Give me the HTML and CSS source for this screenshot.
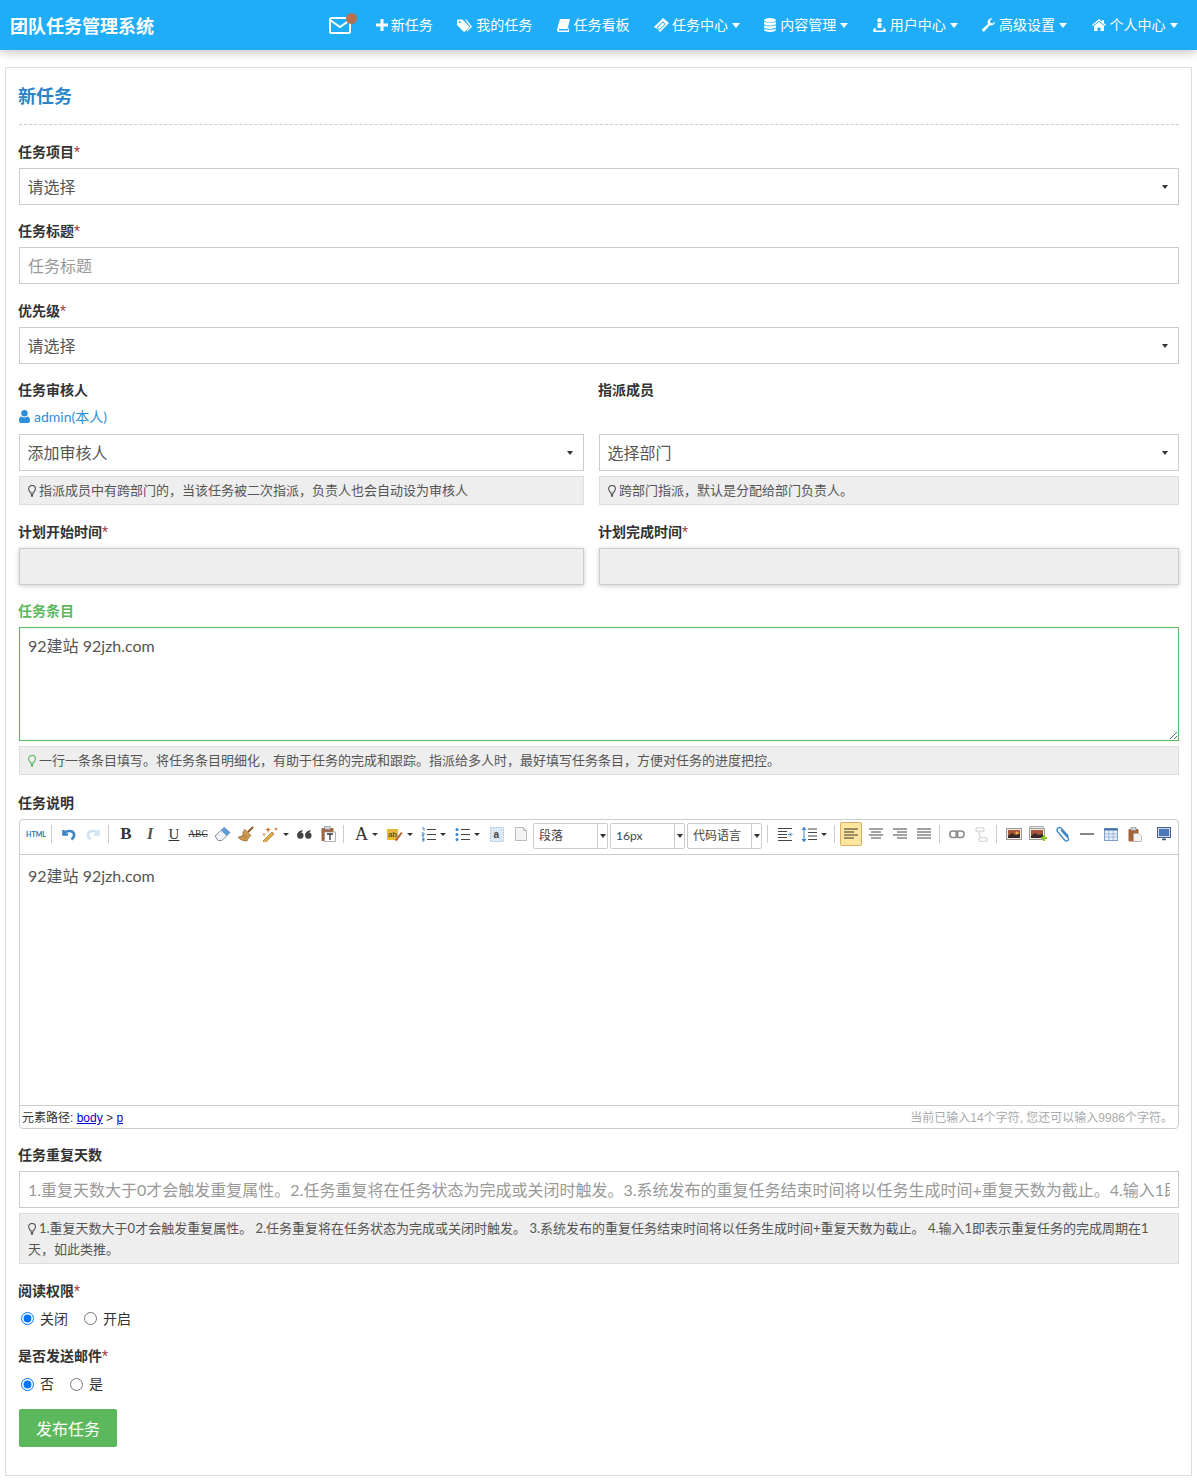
FILE: index.html
```html
<!DOCTYPE html>
<html>
<head>
  <meta charset="UTF-8" />
  <title>团队任务管理系统</title>
  <link rel="stylesheet" href="styles.css">
</head>

<body>
  <header class="topbar">
    <a class="brand">团队任务管理系统</a>
    <nav class="nav">
      <span class="mail">
        <svg width="22" height="17" viewBox="0 0 22 17" fill="none" stroke="#fff" stroke-width="2"><rect x="1" y="1" width="20" height="15" rx="1.5"/><path d="M1 3l10 7 10-7"/></svg>
        <i class="dot"></i>
      </span>
      <a class="nav-item nav-item-tight">
        <svg width="12" height="12" viewBox="0 0 12 12" fill="#fff"><path d="M4.500 0h3v4.500h4.500v3H7.500V12h-3V7.500H0v-3h4.500z"/></svg>新任务</a>
      <a class="nav-item">
        <svg width="15" height="13" viewBox="0 0 15 13" fill="#fff"><path d="M0 1v5l6.500 6.500a1 1 0 0 0 1.400 0l4-4a1 1 0 0 0 0-1.400L5.500 0.500H1z"/><path d="M8 .5h1.500l5 6.500a1 1 0 0 1 0 1.400l-4.200 4.200-1-.8 4-4.100z"/><circle cx="2.600" cy="3" r="1" fill="#1eadf6"/></svg>我的任务</a>
      <a class="nav-item">
        <svg width="13" height="13" viewBox="0 0 13 13" fill="#fff"><path d="M3 0h10l-2.500 10H2.300c-.8 0-.8 1.500 0 1.500H11l1-4v5.500H2C.5 13-.3 11.500.2 10z"/></svg>任务看板</a>
      <a class="nav-item nav-item-tight">
        <svg width="15" height="14" viewBox="0 0 15 14" fill="#fff"><path d="M9 0l6 5-9 9-1.800-1.800c.6-1-.4-2-1.400-1.400L0 9z"/><path d="M8.800 3.300l3 2.700-6 6-3-2.800z" fill="#1eadf6"/><path d="M8.800 4.500l1.900 1.600-5 5-1.900-1.700z"/></svg>任务中心<i class="caret"></i></a>
      <a class="nav-item">
        <svg width="12" height="14" viewBox="0 0 12 14" fill="#fff"><ellipse cx="6" cy="2.200" rx="6" ry="2.200"/><path d="M0 3.700c1 1.300 11 1.300 12 0v2.200c-1 2-11 2-12 0zM0 7.200c1 1.500 11 1.500 12 0v2.300c-1 1.900-11 1.900-12 0zM0 10.700c1 1.500 11 1.500 12 0v1.100c-1 2.900-11 2.900-12 0z"/></svg>内容管理<i class="caret"></i></a>
      <a class="nav-item">
        <svg width="13" height="14" viewBox="0 0 13 14" fill="#fff"><circle cx="6.500" cy="2.200" r="2.200"/><path d="M4.500 5h4v5h-4z"/><path d="M2.500 9.500c-1 .5-2.500 1.500-2.500 3 0 1 1 1.500 2 1.500h9c1 0 2-.5 2-1.500 0-1.500-1.500-2.500-2.500-3v1.500c0 1-1 1.500-1.500 1.500H4c-.5 0-1.500-.5-1.500-1.500z"/></svg>用户中心<i class="caret"></i></a>
      <a class="nav-item">
        <svg width="13" height="14" viewBox="0 0 13 14" fill="#fff"><path d="M13 3.500a4 4 0 0 1-5.300 3.800L2.800 13a1.500 1.500 0 0 1-2.400-1.900L6 6A4 4 0 0 1 10.500.3L8 2.800 8.600 5l2.200.6 2-2.100z"/></svg>高级设置<i class="caret"></i></a>
      <a class="nav-item">
        <svg width="14" height="12" viewBox="0 0 14 12" fill="#fff"><path d="M7 0l3 2.600V1h2v3.300L14 6l-.8.900L7 1.700.8 6.900 0 6z"/><path d="M2 7l5-4.200L12 7v5H8.500V8.500h-3V12H2z"/></svg>个人中心<i class="caret"></i></a>
    </nav>
  </header>

  <main class="page">
    <section class="panel">
      <h1 class="panel-title">新任务</h1>

      <div class="group">
        <label class="label">任务项目<em>*</em></label>
        <div class="select">请选择<i class="arrow"></i></div>
      </div>

      <div class="group">
        <label class="label">任务标题<em>*</em></label>
        <input class="control" type="text" placeholder="任务标题" />
      </div>

      <div class="group">
        <label class="label">优先级<em>*</em></label>
        <div class="select">请选择<i class="arrow"></i></div>
      </div>

      <div class="cols">
        <div class="group">
          <label class="label">任务审核人</label>
          <div class="owner">
            <svg width="11" height="13" viewBox="0 0 11 13" fill="#2a8fd8"><circle cx="5.500" cy="3.200" r="3.200"/><path d="M0 11c0-3 1-4.500 2.500-4.500 1.800 1.300 4.200 1.300 6 0C10 6.500 11 8 11 11c0 1.300-.8 2-2 2H2c-1.200 0-2-.7-2-2z"/></svg>
            admin(本人)
          </div>
          <div class="select">添加审核人<i class="arrow"></i></div>
          <div class="help">
            <svg class="bulb" width="8" height="12" viewBox="0 0 8 12" fill="none" stroke="#555" stroke-width="1.100"><path d="M2.500 8C2.200 6.500.6 5.700.6 3.800a3.400 3.400 0 0 1 6.800 0C7.400 5.700 5.800 6.500 5.500 8z"/><path d="M2.800 9.500h2.400M3 11h2" stroke-width="1.300"/></svg>指派成员中有跨部门的，当该任务被二次指派，负责人也会自动设为审核人
          </div>
        </div>
        <div class="group">
          <label class="label label-wide">指派成员</label>
          <div class="select">选择部门<i class="arrow"></i></div>
          <div class="help">
            <svg class="bulb" width="8" height="12" viewBox="0 0 8 12" fill="none" stroke="#555" stroke-width="1.100"><path d="M2.500 8C2.200 6.500.6 5.700.6 3.800a3.400 3.400 0 0 1 6.800 0C7.400 5.700 5.800 6.500 5.500 8z"/><path d="M2.800 9.500h2.400M3 11h2" stroke-width="1.300"/></svg>跨部门指派，默认是分配给部门负责人。
          </div>
        </div>
      </div>

      <div class="cols">
        <div class="group">
          <label class="label">计划开始时间<em>*</em></label>
          <input class="control control-date" type="text" readonly />
        </div>
        <div class="group">
          <label class="label">计划完成时间<em>*</em></label>
          <input class="control control-date" type="text" readonly />
        </div>
      </div>

      <div class="group group-roomy">
        <label class="label label-ok">任务条目</label>
        <textarea class="control items">92建站 92jzh.com</textarea>
        <div class="help">
          <svg class="bulb" width="8" height="12" viewBox="0 0 8 12" fill="none" stroke="#5cb85c" stroke-width="1.100"><path d="M2.500 8C2.200 6.500.6 5.700.6 3.800a3.400 3.400 0 0 1 6.800 0C7.400 5.700 5.800 6.500 5.500 8z"/><path d="M2.800 9.500h2.400M3 11h2" stroke-width="1.300"/></svg>一行一条条目填写。将任务条目明细化，有助于任务的完成和跟踪。指派给多人时，最好填写任务条目，方便对任务的进度把控。
        </div>
      </div>

      <div class="group">
        <label class="label">任务说明</label>
        <div class="editor">
          <div class="toolbar">
            <span class="tool tool-html">HTML</span>
            <i class="sep"></i>
            <span class="tool"><svg width="14" height="14" viewBox="0 0 14 14" fill="none" stroke="#3d85c6" stroke-width="2.600"><path d="M1.500 3v4.500H6"/><path d="M2 7c2-4 9-4 10 0 .5 2-.5 4-2.500 5.500"/></svg></span>
            <span class="tool"><svg width="14" height="14" viewBox="0 0 14 14" fill="none" stroke="#cfe3f4" stroke-width="2.600"><path d="M12.500 3v4.500H8"/><path d="M12 7C10 3 3 3 2 7c-.5 2 .5 4 2.500 5.500"/></svg></span>
            <i class="sep"></i>
            <span class="tool glyph glyph-b">B</span>
            <span class="tool glyph glyph-i">I</span>
            <span class="tool glyph glyph-u">U</span>
            <span class="tool glyph glyph-abc">ABC</span>
            <span class="tool"><svg width="17" height="16" viewBox="0 0 17 16"><path d="M1 10L10 1.500l6 5-8 8H4z" fill="#eef2f6" stroke="#8a9099"/><path d="M7 4.500L10.300 1.500l5.700 5-3.500 3.300z" fill="#5a9bd8"/></svg></span>
            <span class="tool"><svg width="16" height="16" viewBox="0 0 16 16"><path d="M10 6l5-5" stroke="#8a5a2b" stroke-width="2"/><path d="M7 3.500l6 6c-2 1-3 3-4 5.500-3 0-7-1-9-4 3 0 4-1 5-2.500-.5-2 .5-4 2-5z" fill="#cf9a52" stroke="#8a5a2b" stroke-width=".7"/><path d="M4 11l3-2M6 13l3-3" stroke="#8a5a2b" stroke-width=".7"/></svg></span>
            <span class="tool tool-drop"><svg width="17" height="16" viewBox="0 0 17 16"><path d="M1 15L10 6l2 2-9 9z" fill="#e4a94a" stroke="#a86f1d" stroke-width=".7"/><path d="M6 1l1 2 2 .5-2 1L6 6.500 5.300 4.500l-2-1 2-.5zM14 1l.6 1.400 1.400.6-1.400.6L14 5l-.6-1.400L12 3l1.400-.6zM2 7l.5 1 1 .5-1 .5-.5 1-.5-1-1-.5 1-.5z" fill="#d8692c"/></svg><i class="mini"></i></span>
            <span class="tool"><svg width="15" height="9" viewBox="0 0 15 9" fill="#444"><circle cx="3.300" cy="5.500" r="3.200"/><circle cx="11.300" cy="5.500" r="3.200"/><path d="M.3 5C.5 2.500 2 .5 5.500 0v1.500C3.500 2 3 3.500 3 5zM8.300 5c.2-2.500 1.700-4.500 5.200-5v1.500C11.500 2 11 3.500 11 5z"/></svg></span>
            <span class="tool"><svg width="15" height="16" viewBox="0 0 15 16"><rect x=".5" y="2" width="12" height="13" rx="1" fill="#a5623b"/><rect x="3.500" y="0.500" width="6" height="3" fill="#cfd3d8" stroke="#777" stroke-width=".5"/><rect x="3.500" y="6" width="11" height="9.500" fill="#fff" stroke="#8a9099" stroke-width=".7"/><path d="M6 8h6M9 8v6" stroke="#333" stroke-width="1.300"/></svg></span>
            <i class="sep"></i>
            <span class="tool tool-drop tool-font"><span class="glyph glyph-a">A</span><i class="mini"></i></span>
            <span class="tool tool-drop"><svg width="16" height="15" viewBox="0 0 16 15"><rect y="2" width="11" height="11" fill="#e8b93f"/><text x="1" y="10" class="svg-ab">ab</text><path d="M8 13l6-8 1.500 1.200-6 8z" fill="#b5622b"/></svg><i class="mini"></i></span>
            <span class="tool tool-drop"><svg width="15" height="15" viewBox="0 0 15 15"><path d="M6 2.500h9M6 7.500h9M6 12.500h9" stroke="#444"/><path d="M1 1h2v3M.5 6h2.500v2H1v1h2M1 11h2v1.500H1.500 3V14H1" fill="none" stroke="#3d85c6"/></svg><i class="mini"></i></span>
            <span class="tool tool-drop"><svg width="15" height="15" viewBox="0 0 15 15"><path d="M6 2.500h9M6 7.500h9M6 12.500h9" stroke="#444"/><circle cx="2" cy="2.500" r="1.500" fill="#3d85c6"/><circle cx="2" cy="7.500" r="1.500" fill="#3d85c6"/><circle cx="2" cy="12.500" r="1.500" fill="#3d85c6"/></svg><i class="mini"></i></span>
            <span class="tool"><svg width="14" height="15" viewBox="0 0 14 15"><rect x=".5" y=".5" width="13" height="14" fill="#dbe7f3" stroke="#a9c4de" stroke-dasharray="1.500 1"/><text x="3.500" y="10.500" class="svg-a">a</text></svg></span>
            <span class="tool"><svg width="12" height="14" viewBox="0 0 12 14"><path d="M.5.500h8l3 3v10H.5z" fill="#f3f3f3" stroke="#bbb"/><path d="M8.500.500v3h3" fill="#ddd" stroke="#bbb"/></svg></span>
            <div class="combo combo-first"><span>段落</span><i class="combo-btn"></i></div>
            <div class="combo"><span>16px</span><i class="combo-btn"></i></div>
            <div class="combo"><span>代码语言</span><i class="combo-btn"></i></div>
            <i class="sep sep-wide"></i>
            <span class="tool"><svg width="15" height="15" viewBox="0 0 15 15"><path d="M0 1.500h14M0 4.500h9M0 7.500h9M0 10.500h9M0 13.500h14" stroke="#444"/><path d="M10 7.500h3M12 5.500l2 2-2 2" fill="none" stroke="#3d85c6"/></svg></span>
            <span class="tool tool-drop"><svg width="16" height="17" viewBox="0 0 16 17"><path d="M7 3h9M7 6.500h9M7 10h9M7 13.500h9" stroke="#444"/><path d="M3 1v15" stroke="#3d85c6"/><path d="M.5 4L3 1l2.500 3zM.5 13L3 16l2.500-3z" fill="#3d85c6"/></svg><i class="mini"></i></span>
            <i class="sep"></i>
            <span class="tool tool-on"><svg width="14" height="12" viewBox="0 0 14 12"><path d="M0 1h14M0 4h10M0 7h14M0 10h10" stroke="#333"/></svg></span>
            <span class="tool"><svg width="14" height="12" viewBox="0 0 14 12"><path d="M0 1h14M2 4h10M0 7h14M2 10h10" stroke="#444"/></svg></span>
            <span class="tool"><svg width="14" height="12" viewBox="0 0 14 12"><path d="M0 1h14M4 4h10M0 7h14M4 10h10" stroke="#444"/></svg></span>
            <span class="tool"><svg width="14" height="12" viewBox="0 0 14 12"><path d="M0 1h14M0 4h14M0 7h14M0 10h14" stroke="#444"/></svg></span>
            <i class="sep"></i>
            <span class="tool"><svg width="16" height="9" viewBox="0 0 16 9" fill="none" stroke="#888" stroke-width="1.500"><rect x=".8" y="1" width="8" height="6.500" rx="3"/><rect x="7" y="1" width="8" height="6.500" rx="3"/></svg></span>
            <span class="tool"><svg width="15" height="15" viewBox="0 0 15 15" fill="none" stroke="#dcdcdc" stroke-width="1.600"><path d="M8 4.500H4a2 2 0 0 1 0-4h4a2 2 0 0 1 0 4M7 14.500h4a2 2 0 0 0 0-4H7a2 2 0 0 0 0 4M4 4.500l3 6"/></svg></span>
            <i class="sep"></i>
            <span class="tool"><svg width="16" height="12" viewBox="0 0 16 12"><rect x=".5" y=".5" width="15" height="11" fill="#f3ece2" stroke="#9a9a9a"/><rect x="2" y="2" width="12" height="8" fill="#a5563a"/><path d="M2 8l4-3 3 2 5-1v4H2z" fill="#3a2a2a"/><path d="M11 3.500v3M9.500 5h3" stroke="#f2d24a"/></svg></span>
            <span class="tool"><svg width="19" height="16" viewBox="0 0 19 16"><rect x="1" y=".5" width="13" height="10" fill="#eee" stroke="#aaa"/><rect x=".5" y="2.500" width="15" height="11" fill="#f3ece2" stroke="#9a9a9a"/><rect x="2" y="4" width="12" height="8" fill="#a5563a"/><path d="M2 10l4-3 3 2 5-1v4H2z" fill="#3a2a2a"/><path d="M15 9v6M12 12h6" stroke="#8ac926" stroke-width="2.200"/></svg></span>
            <span class="tool tool-clip"><svg width="15" height="16" viewBox="0 0 15 16" fill="none" stroke="#3d85c6" stroke-width="1.300"><path d="M5 4l7 8c1.500 2-1 4-3 2.500L1.500 5.500C0 3.500 2.500 0 5 2l7.500 8.500"/></svg></span>
            <span class="tool"><svg width="14" height="2" viewBox="0 0 14 2"><path d="M0 1h14" stroke="#444" stroke-width="1.300"/></svg></span>
            <span class="tool"><svg width="14" height="13" viewBox="0 0 14 13"><rect x=".5" y=".5" width="13" height="12" fill="#eaf1f9" stroke="#7f9dc4"/><path d="M.5 1.500h13" stroke="#3a6db0" stroke-width="2"/><path d="M.5 6h13M.5 9h13M4.800 3v9M9.200 3v9" stroke="#9db8d8"/></svg></span>
            <span class="tool"><svg width="14" height="15" viewBox="0 0 14 15"><rect x=".5" y="2" width="10" height="12.500" rx="1" fill="#a5623b"/><rect x="3" y=".5" width="5" height="3" fill="#cfd3d8" stroke="#777" stroke-width=".5"/><path d="M5.500 6.500H11l2.500 2.500v5.500h-8z" fill="#f3f3f3" stroke="#aaa" stroke-width=".7"/></svg></span>
            <span class="tool tool-last"><svg width="14" height="14" viewBox="0 0 14 14"><rect x=".5" y=".5" width="13" height="10" fill="#c9d8ee" stroke="#4a5f86"/><rect x="2" y="2" width="10" height="7" fill="#4a78b8"/><path d="M5 12.500h4M7 10.500v2" stroke="#4a5f86" stroke-width="1.300"/></svg></span>
          </div>
          <div class="editor-body">92建站 92jzh.com</div>
          <div class="editor-foot">
            <span>元素路径: <a>body</a> &gt; <a>p</a></span>
            <span class="count">当前已输入14个字符, 您还可以输入9986个字符。</span>
          </div>
        </div>
      </div>

      <div class="group">
        <label class="label">任务重复天数</label>
        <input class="control" type="text" placeholder="1.重复天数大于0才会触发重复属性。2.任务重复将在任务状态为完成或关闭时触发。3.系统发布的重复任务结束时间将以任务生成时间+重复天数为截止。4.输入1即表示重复任务的完成周期在1天，如此类推。" />
        <div class="help help-multi">
          <svg class="bulb" width="8" height="12" viewBox="0 0 8 12" fill="none" stroke="#555" stroke-width="1.100"><path d="M2.500 8C2.200 6.500.6 5.700.6 3.800a3.400 3.400 0 0 1 6.800 0C7.400 5.700 5.800 6.500 5.500 8z"/><path d="M2.800 9.500h2.400M3 11h2" stroke-width="1.300"/></svg>1.重复天数大于0才会触发重复属性。 2.任务重复将在任务状态为完成或关闭时触发。 3.系统发布的重复任务结束时间将以任务生成时间+重复天数为截止。 4.输入1即表示重复任务的完成周期在1天，如此类推。
        </div>
      </div>

      <div class="group">
        <label class="label">阅读权限<em>*</em></label>
        <div class="radios">
          <label class="radio"><input type="radio" name="read" checked />关闭</label>
          <label class="radio"><input type="radio" name="read" />开启</label>
        </div>
      </div>

      <div class="group group-last">
        <label class="label">是否发送邮件<em>*</em></label>
        <div class="radios">
          <label class="radio"><input type="radio" name="mail" checked />否</label>
          <label class="radio"><input type="radio" name="mail" />是</label>
        </div>
      </div>

      <button class="btn-submit">发布任务</button>
    </section>
  </main>
</body>
</html>
```

FILE: styles.css
```css
* {
  box-sizing: border-box;
}

html, body {
  margin: 0;
  background: #fff;
  color: #333;
  font-family: Lato, "Noto Sans CJK SC", sans-serif;
  font-size: 14px;
}

/* top bar */
.topbar {
  height: 50px;
  background: #1eadf6;
  box-shadow: 0 2px 10px rgba(0, 0, 0, .25);
  display: flex;
  align-items: center;
  padding: 0 19.500px 0 10px;
  color: #fff;
}

.brand {
  font-size: 18px;
  font-weight: bold;
  line-height: 50px;
  padding-top: 1px;
}

.nav {
  margin-left: auto;
  display: flex;
  align-items: center;
  gap: 24.400px;
}

.nav-item {
  display: flex;
  align-items: center;
  gap: 4px;
  line-height: 20px;
}

.nav-item-tight {
  gap: 3px;
}

.nav-item-tight .caret {
  margin-left: 1px;
}

.mail {
  position: relative;
  display: flex;
}

.dot {
  position: absolute;
  top: -4px;
  right: -6px;
  width: 11px;
  height: 11px;
  border-radius: 50%;
  background: #b5704f;
}

.caret {
  border-top: 5px solid #fff;
  border-left: 4px solid transparent;
  border-right: 4px solid transparent;
}

/* panel */
.page {
  padding: 17px 5px 0;
}

.panel {
  border: 1px solid #ddd;
  padding: 0 12px 28px 13px;
  height: 1409px;
}

.panel-title {
  margin: 0 0 16px;
  height: 57px;
  padding-top: 15px;
  line-height: 26px;
  font-size: 18px;
  font-weight: bold;
  text-indent: -1px;
  color: #2a85c8;
  border-bottom: 1px dashed #ccc;
}

.group {
  margin-bottom: 15.400px;
}

.group-roomy {
  margin-bottom: 16.500px;
}

.group-last {
  margin-bottom: 14px;
}

.label {
  display: block;
  height: 21px;
  margin: 0 0 6px -1px;
  line-height: 21px;
  font-weight: bold;
  color: #333;
}

.label em {
  font-family: Roboto, sans-serif;
  font-style: normal;
  font-weight: normal;
  line-height: 1;
  color: #a94442;
}

.label-ok {
  color: #5cb85c;
}

.label-wide {
  margin-bottom: 33.500px;
}

.control,
.select {
  display: block;
  width: 100%;
  height: 37px;
  padding: 0 8px;
  border: 1px solid #ccc;
  background: #fff;
  color: #555;
  font-family: inherit;
  font-size: 16px;
  line-height: 35px;
  outline: none;
}

.control::placeholder {
  color: #999;
}

.select {
  position: relative;
  padding-left: 7.500px;
}

.arrow {
  position: absolute;
  top: 16px;
  right: 10px;
  border-top: 4px solid #333;
  border-left: 3px solid transparent;
  border-right: 3px solid transparent;
}

.cols {
  display: grid;
  grid-template-columns: 565px 1fr;
  gap: 15px;
}

.owner {
  margin-bottom: 6.500px;
  line-height: 21px;
  color: #2a8fd8;
  display: flex;
  align-items: center;
  gap: 4px;
}

.help {
  margin-top: 5px;
  padding: 3.500px 8px 4px;
  border: 1px solid #ddd;
  background: #eee;
  color: #555;
  font-size: 13px;
  line-height: 20px;
}

.help-multi {
  padding: 4px 8px 3px;
  line-height: 21px;
}

.bulb {
  margin: 0 3px 0 0;
  vertical-align: -2px;
}

.control-date {
  background: #eee;
  box-shadow: 0 1px 5px rgba(0, 0, 0, .2);
}

.items {
  height: 114px;
  padding: 7px 8px;
  line-height: 22px;
  border-color: #5cb85c;
  resize: vertical;
}

/* editor */
.editor {
  height: 310px;
  border: 1px solid #ccc;
  border-radius: 4px;
  display: flex;
  flex-direction: column;
}

.toolbar {
  height: 35px;
  flex: none;
  display: flex;
  align-items: center;
  padding: 0 0 5px 4px;
  border-bottom: 1px solid #ccc;
}

.tool {
  flex: none;
  width: 24px;
  height: 24px;
  display: flex;
  align-items: center;
  justify-content: center;
}

.tool-drop {
  width: 34px;
  justify-content: flex-start;
  padding-left: 4px;
  gap: 4px;
}

.tool-font {
  padding-left: 6px;
}

.tool-html {
  font-size: 7px;
  font-weight: bold;
  color: #2a6fb0;
}

.tool-on {
  width: 22px;
  margin-right: 2px;
  background: #ffe69f;
  border: 1px solid #dcac6c;
  border-radius: 2px;
}

.tool-clip {
  margin-left: 1px;
}

.tool-last {
  margin-left: 5px;
}

.sep {
  flex: none;
  width: 1px;
  height: 18px;
  margin: 0 5px 0 3px;
  background: #ccc;
}

.sep-wide {
  margin-left: 5px;
}

.mini {
  flex: none;
  border-top: 3px solid #333;
  border-left: 3px solid transparent;
  border-right: 3px solid transparent;
}

.glyph {
  font-family: "Liberation Serif", serif;
  color: #333;
}

.glyph-b {
  font-size: 17px;
  font-weight: bold;
}

.glyph-i {
  font-size: 16px;
  font-style: italic;
  font-weight: bold;
  color: #555;
}

.glyph-u {
  font-size: 15px;
  text-decoration: underline;
}

.glyph-abc {
  font-size: 9.500px;
  text-decoration: line-through;
}

.glyph-a {
  font-size: 18px;
}

.svg-ab {
  font-family: "Liberation Sans", sans-serif;
  font-size: 8px;
  fill: #333;
}

.svg-a {
  font-family: "Liberation Sans", sans-serif;
  font-size: 10px;
  font-weight: bold;
  fill: #444;
}

.combo {
  flex: none;
  position: relative;
  width: 75px;
  height: 26px;
  margin-left: 2px;
  margin-top: 4px;
  padding-left: 5px;
  border: 1px solid #ccc;
  border-radius: 2px;
  font-size: 12px;
  line-height: 24px;
  color: #444;
}

.combo-first {
  margin-left: 0;
}

.combo-btn {
  position: absolute;
  top: 0;
  right: 0;
  width: 10px;
  height: 24px;
  border-left: 1px solid #ccc;
}

.combo-btn::after {
  content: "";
  position: absolute;
  top: 10px;
  left: 2px;
  border-top: 4px solid #333;
  border-left: 3px solid transparent;
  border-right: 3px solid transparent;
}

.editor-body {
  flex: 1;
  padding: 10px 8px;
  font-size: 16px;
  line-height: 22px;
  color: #555;
}

.editor-foot {
  height: 23px;
  flex: none;
  display: flex;
  justify-content: space-between;
  padding: 0 5px 0 2px;
  border-top: 1px solid #ccc;
  font-family: "Liberation Sans", "Noto Sans CJK SC", sans-serif;
  font-size: 12px;
  line-height: 24px;
  color: #333;
}

.editor-foot a {
  color: #00c;
  text-decoration: underline;
}

.count {
  color: #aaa;
}

/* radios */
.radios {
  display: flex;
  gap: 14px;
  line-height: 20px;
  padding: 2px 0 1px;
}

.radio {
  display: flex;
  align-items: center;
  color: #333;
}

.radio input {
  margin: 0 6px 0 2px;
}

.btn-submit {
  display: block;
  width: 98px;
  height: 38px;
  padding: 0;
  border: 0;
  border-radius: 2px;
  background: #5cb85c;
  color: #fff;
  font-family: inherit;
  font-size: 16px;
}
```
